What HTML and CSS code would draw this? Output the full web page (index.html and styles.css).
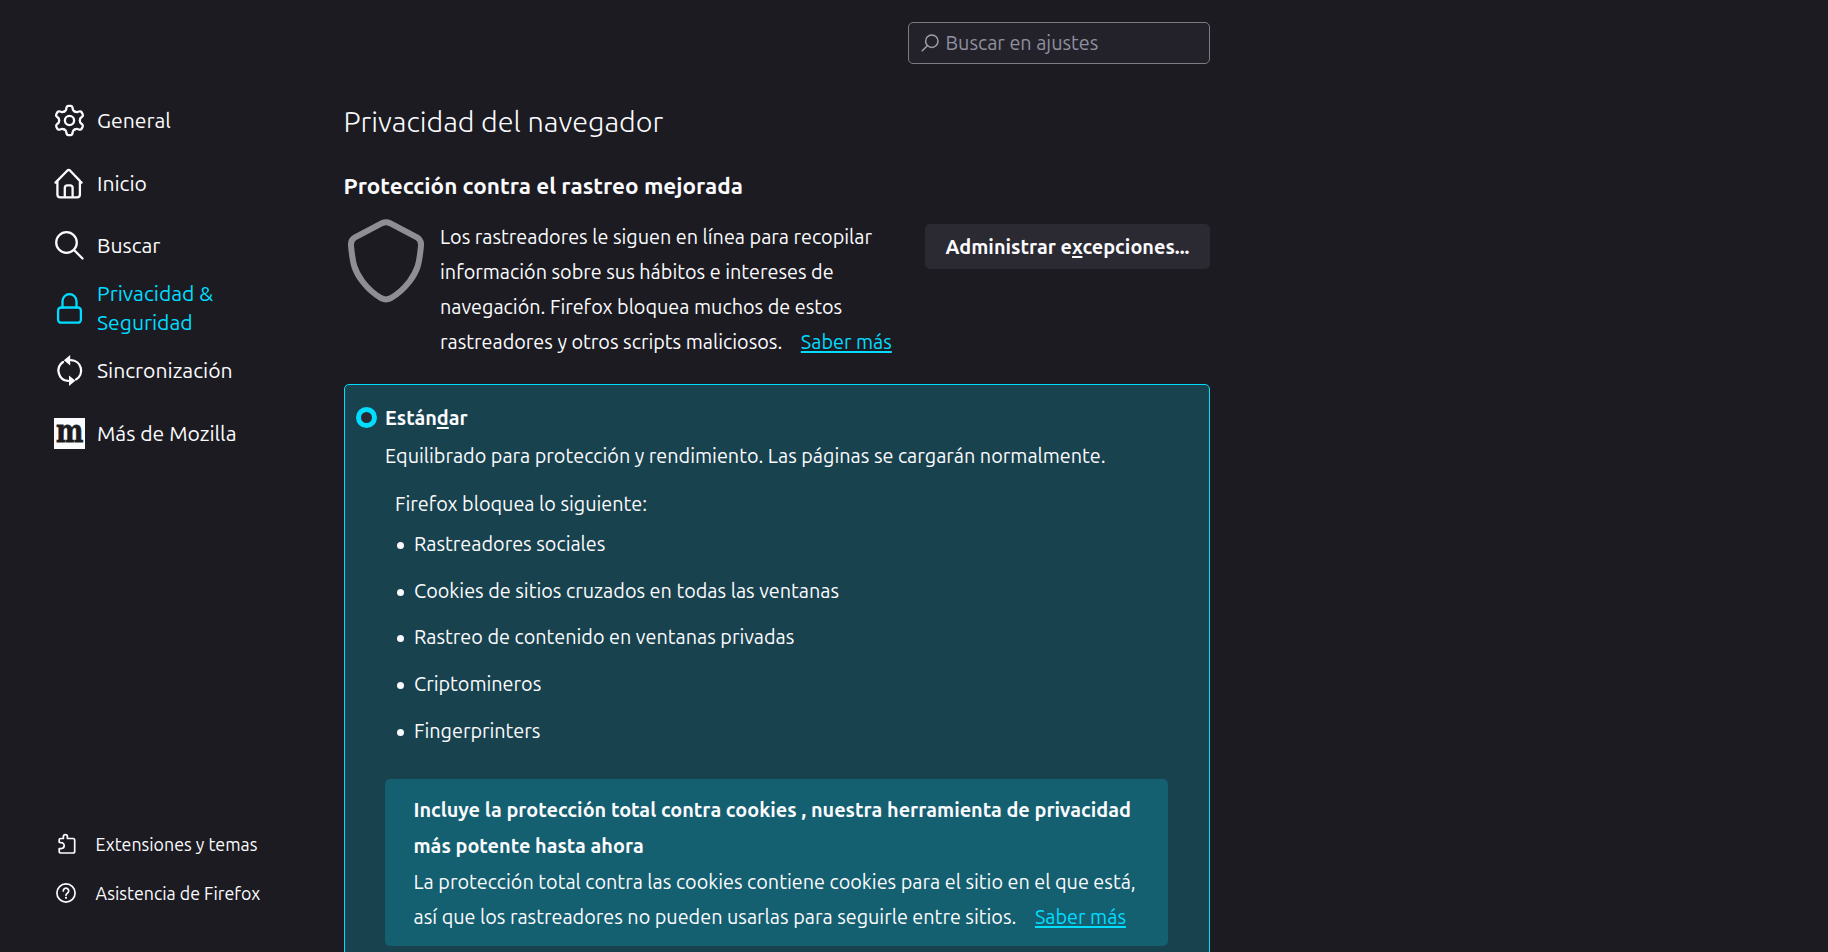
FILE: index.html
```
<!DOCTYPE html>
<html lang="es">
<head>
<meta charset="utf-8">
<title>Ajustes</title>
<link rel="stylesheet" href="styles.css">
</head>
<body>
<aside class="sidebar">
  <nav class="categories">
    <a class="category"><svg class="category-icon" viewBox="-15.5 -15.5 31 31"><g class="line"><circle r="4.6"/><path id="tooth" d="M-5.2-9C-4.2-9.6-3.4-10-3.3-11.2L-3.1-12.6Q-2.7-14.6-1.2-14.6H1.2Q2.7-14.6 3.1-12.6L3.3-11.2C3.4-10 4.2-9.6 5.2-9"/><use href="#tooth" transform="rotate(60)"/><use href="#tooth" transform="rotate(120)"/><use href="#tooth" transform="rotate(180)"/><use href="#tooth" transform="rotate(240)"/><use href="#tooth" transform="rotate(300)"/></g></svg><span>General</span></a>
    <a class="category"><svg class="category-icon" viewBox="0 0 31 31"><g class="line"><path d="M1.5 14.6 13.2 2.7Q14.7 1.3 16.2 2.7L27.6 14.6M3.4 13V26.5Q3.4 29.4 6.3 29.4H23Q25.9 29.4 25.9 26.5V13M10.8 29V20Q10.8 17.4 13.4 17.4H16Q18.6 17.4 18.6 20V29"/></g></svg><span>Inicio</span></a>
    <a class="category"><svg class="category-icon" viewBox="0 0 31 31"><g class="line"><circle cx="12.5" cy="12.5" r="10.3"/><path d="M20 20 28.5 28.5"/></g></svg><span>Buscar</span></a>
    <a class="category selected"><svg class="category-icon" viewBox="0 0 31 31"><g class="line"><rect x="4.1" y="14.5" width="22.8" height="15.2" rx="3"/><path d="M8.5 14.5V8.2A7 7 0 0 1 22.5 8.2V14.5"/></g></svg><span>Privacidad &amp;<br>Seguridad</span></a>
    <a class="category"><svg class="category-icon" viewBox="0 0 31 31"><g class="line"><path d="M9 7A10.3 10.3 0 0 0 14 25.8M22 24.4A10.3 10.3 0 0 0 17 5.2"/></g><path class="solid" d="M16.2 0V10.6L9.8 5.3ZM15 20.4V31L21.4 25.7Z"/></svg><span>Sincronización</span></a>
    <a class="category"><svg class="category-icon" viewBox="0 0 31 31"><rect class="solid" width="31" height="31"/><text class="mozilla" x="1.9" y="24" textLength="27.4" lengthAdjust="spacingAndGlyphs">m</text></svg><span>Más de Mozilla</span></a>
  </nav>
  <nav class="footer-links">
    <a class="footer-link"><svg class="footer-icon" viewBox="0 0 20 20"><path class="thin" d="M3.2 8.3V6.1Q3.2 4.5 4.8 4.5H7.4V2.6A2 2 0 0 1 11.4 2.6V4.5H17Q18.7 4.5 18.7 6.2V17.2Q18.7 19 17 19H5Q3.2 19 3.2 17.2V14.6H5.2A2.9 2.9 0 0 0 5.2 8.6Z"/></svg><span>Extensiones y temas</span></a>
    <a class="footer-link"><svg class="footer-icon" viewBox="0 0 20 20"><circle class="thin" cx="10" cy="10" r="9.1"/><path class="thin" d="M7.3 7.9A2.7 2.7 0 1 1 11.4 10.2Q10 11 10 12.3"/><circle class="solid" cx="10" cy="14.8" r="1.1"/></svg><span>Asistencia de Firefox</span></a>
  </nav>
</aside>
<main class="pane">
  <div class="search"><svg class="search-icon" viewBox="0 0 18 18"><circle cx="10.8" cy="7.2" r="6.2"/><path d="M6.3 11.7.8 17.2"/></svg><span>Buscar en ajustes</span></div>
  <h1 class="title">Privacidad del navegador</h1>
  <h2 class="subtitle">Protección contra el rastreo mejorada</h2>
  <section class="tracking">
    <svg class="shield" viewBox="0 0 76 84"><path d="M34 4.2Q38 2.3 42 4.2L69 18.3Q73.4 21 73 26.5C71.3 45 69.5 52 61.5 62.5Q53 73.5 42.5 79.3Q38 81.5 33.5 79.3Q23 73.5 14.5 62.5C6.5 52 4.7 45 3 26.5Q2.6 21 7 18.3Z"/></svg>
    <p class="text">Los rastreadores le siguen en línea para recopilar<br>información sobre sus hábitos e intereses de<br>navegación. Firefox bloquea muchos de estos<br>rastreadores y otros scripts maliciosos.<a class="link">Saber más</a></p>
    <button class="button">Administrar e<u>x</u>cepciones...</button>
  </section>
  <section class="option">
    <div class="option-head"><span class="radio"></span><b>Están<u>d</u>ar</b></div>
    <p class="text option-desc">Equilibrado para protección y rendimiento. Las páginas se cargarán normalmente.</p>
    <p class="text blocks">Firefox bloquea lo siguiente:</p>
    <ul class="list">
      <li>Rastreadores sociales</li>
      <li>Cookies de sitios cruzados en todas las ventanas</li>
      <li>Rastreo de contenido en ventanas privadas</li>
      <li>Criptomineros</li>
      <li>Fingerprinters</li>
    </ul>
    <div class="text info"><b>Incluye la protección total contra cookies , nuestra herramienta de privacidad<br>más potente hasta ahora</b><br>La protección total contra las cookies contiene cookies para el sitio en el que está,<br>así que los rastreadores no pueden usarlas para seguirle entre sitios.<a class="link">Saber más</a></div>
  </section>
</main>
</body>
</html>
```
FILE: styles.css
```
* { box-sizing: border-box; }
body {
  margin: 0;
  height: 952px;
  display: flex;
  overflow: hidden;
  background: #1c1b22;
  color: #fbfbfe;
  font-family: Ubuntu, "Noto Sans", "Open Sans", sans-serif;
  font-size: 19.82px;
  white-space: nowrap;
}
h1, h2, p, ul { margin: 0; padding: 0; }
b { font-size: 19.88px; }
u { text-decoration: underline; text-decoration-thickness: 2px; text-underline-offset: 2px; text-decoration-skip-ink: none; }

.sidebar {
  width: 344px;
  flex: none;
  padding: 89.5px 0 34.5px 54px;
  display: flex;
  flex-direction: column;
  justify-content: space-between;
}
.category {
  height: 62.5px;
  display: flex;
  align-items: center;
  gap: 12px;
  font-size: 21.15px;
  line-height: 29px;
}
.category-icon { width: 31px; height: 31px; flex: none; overflow: visible; }
.line { fill: none; stroke: currentColor; stroke-width: 2.3; stroke-linecap: round; stroke-linejoin: round; }
.solid { fill: currentColor; }
.mozilla { font: bold 31px "DejaVu Serif", serif; fill: #1c1b22; stroke: #1c1b22; stroke-width: 0.8; }
.selected { color: #00ddff; }
.footer-link {
  height: 49px;
  padding-left: 2px;
  display: flex;
  align-items: center;
  gap: 19.5px;
  font-size: 17.8px;
}
.footer-icon { width: 20px; height: 20px; overflow: visible; }
.thin { fill: none; stroke: currentColor; stroke-width: 1.7; stroke-linecap: round; stroke-linejoin: round; }

.pane { width: 866px; flex: none; display: flex; flex-direction: column; }
.search {
  width: 302px;
  height: 42px;
  margin-top: 22px;
  padding-left: 12px;
  align-self: flex-end;
  flex: none;
  display: flex;
  align-items: center;
  gap: 7px;
  border: 1px solid #7c7b82;
  border-radius: 5px;
  background: #23222b;
  color: #8f8f9d;
}
.search-icon { width: 18px; height: 18px; margin: -1px 0 0 -0.5px; fill: none; stroke: #a09fa6; stroke-width: 1.5; }
.title { margin: 37px 0 0 -0.5px; height: 40px; font-size: 28.85px; line-height: 40px; font-weight: 300; }
.subtitle { margin: 24.5px 0 0 -0.5px; height: 40px; font-size: 22.5px; line-height: 40px; font-weight: 700; }
.tracking { margin-top: 13.5px; display: flex; align-items: flex-start; }
.shield { width: 76px; height: 84px; margin: 0 16.5px 0 3.5px; flex: none; fill: none; stroke: #8f8e94; stroke-width: 6; stroke-linejoin: round; }
.text { line-height: 35px; }
.tracking .text { width: 485px; padding-top: 1px; }
.link { margin-left: 18.5px; color: #00ddff; text-decoration: underline; text-decoration-thickness: 2px; text-underline-offset: 2px; text-decoration-skip-ink: none; }
.button {
  width: 285px;
  height: 45px;
  margin-top: 5px;
  padding: 0;
  border: 0;
  border-radius: 5px;
  background: #2b2a33;
  color: #fbfbfe;
  font: bold 19.88px Ubuntu, "Noto Sans", sans-serif;
}
.option {
  height: 600px;
  margin-top: 24px;
  padding: 15px 41px 0 40px;
  flex: none;
  border: 1px solid #00ddff;
  border-radius: 5px;
  background: #18424e;
}
.option-head { height: 35px; margin-left: -29px; display: flex; align-items: center; gap: 8px; }
.radio { width: 21px; height: 21px; border: 5.3px solid #00ddff; border-radius: 50%; background: #2b2a33; }
.option-desc { margin-top: 4px; }
.blocks { margin: 13px 0 0 10px; }
.list { margin-top: -1px; padding-left: 29px; list-style: none; }
.list li { height: 46.7px; line-height: 46.7px; display: flex; align-items: center; }
.list li::before { content: ""; width: 7px; height: 7px; margin: 2px 10px 0 -17px; border-radius: 50%; background: #fbfbfe; }
.info { height: 167px; margin-top: 24.5px; padding: 13px 0 0 28.5px; border-radius: 5px; background: #145f70; line-height: 35.3px; }
```
